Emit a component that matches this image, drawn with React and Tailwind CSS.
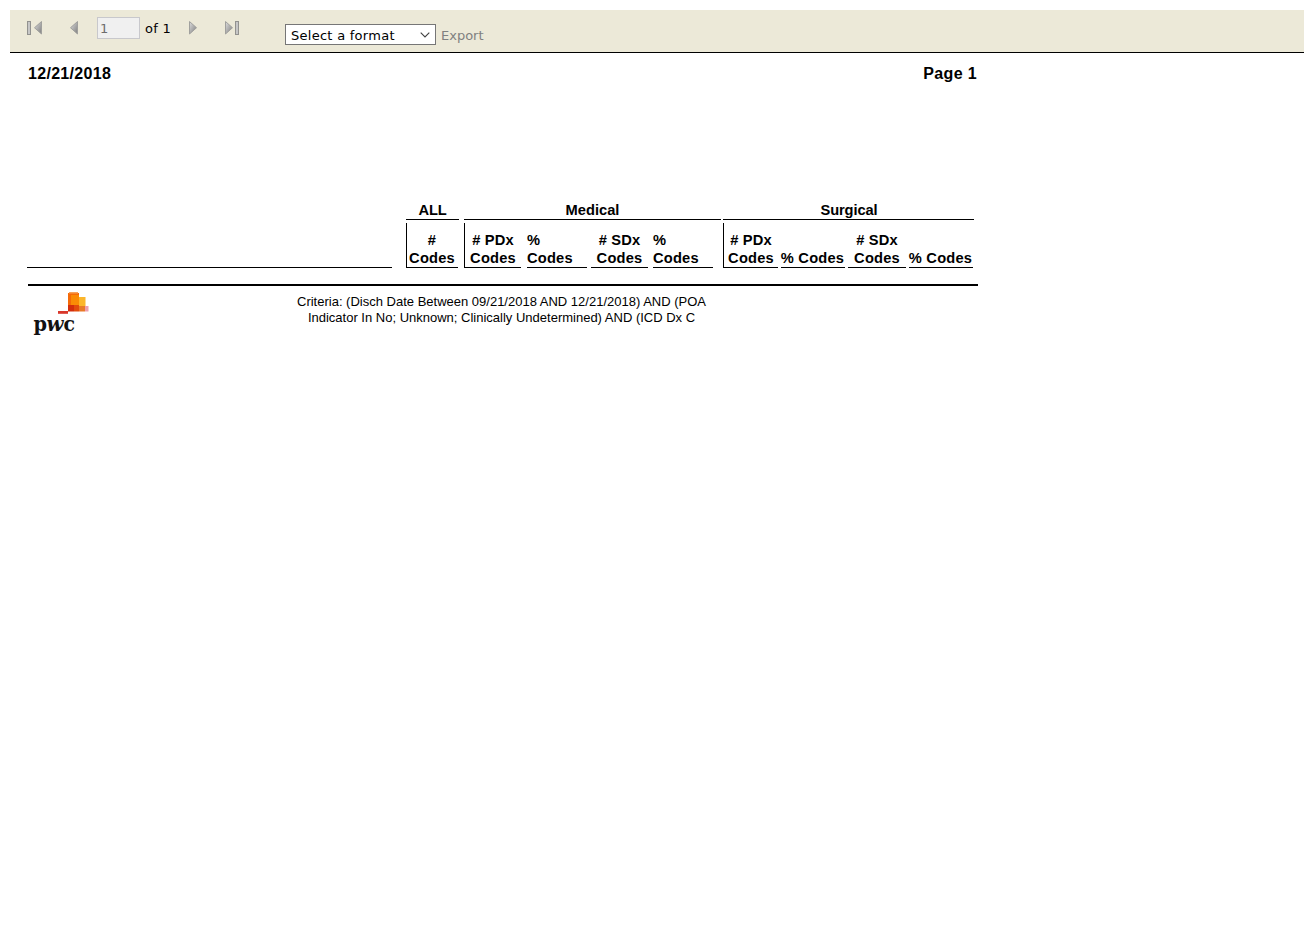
import React from "react";

function Arrow({ dir }) {
  const d = dir === "left" ? "M8.5 1.5V14L1.5 7.75Z" : "M1.5 1.5V14L8.5 7.75Z";
  return (
    <svg width="10" height="16" viewBox="0 0 10 16" className="block shrink-0">
      <defs>
        <linearGradient id={"arrow-" + dir} x1="0" y1="0" x2="1" y2="1">
          <stop offset="0" stopColor="#dedede" />
          <stop offset="1" stopColor="#7d7d7d" />
        </linearGradient>
      </defs>
      <path d={d} fill={"url(#arrow-" + dir + ")"} stroke="#a0a09d" strokeWidth="1" />
    </svg>
  );
}

function Bar() {
  return <span className="block h-[14px] w-[4px] shrink-0 border border-[#92928f] bg-[#c6c6c6]" />;
}

function Toolbar() {
  return (
    <div className="flex h-[43px] items-start border-b border-black bg-[#ece9d8] font-['DejaVu_Sans',sans-serif] text-[13px] text-black">
      <div className="mt-[10px] ml-[17px] flex h-[15px] w-[16px] items-center">
        <Bar />
        <span className="ml-[2px]"><Arrow dir="left" /></span>
      </div>
      <div className="mt-[10px] ml-[26px]"><Arrow dir="left" /></div>
      <div className="mt-[7px] ml-[18px] flex h-[22px] w-[43px] items-center border border-[#c8c8cc] bg-[#f0f0f0] pl-[2px] text-[#6d6d6d]">
        <span className="relative top-px">1</span>
      </div>
      <div className="mt-[9px] ml-[5px] w-[36px] leading-[20px] tracking-[0.25px] whitespace-nowrap">of 1</div>
      <div className="mt-[10px] ml-[7px]"><Arrow dir="right" /></div>
      <div className="mt-[10px] ml-[26px] flex h-[15px] w-[16px] items-center">
        <Arrow dir="right" />
        <span className="ml-[1px]"><Bar /></span>
      </div>
      <div className="mt-[14px] ml-[45px] flex h-[21px] w-[151px] items-center justify-between border border-[#767676] bg-white pr-[5px] pl-[5px] leading-[19px] whitespace-nowrap">
        <span className="relative top-px tracking-[0.27px]">Select a format</span>
        <svg width="10" height="6" viewBox="0 0 10 6" className="block">
          <path d="M0.7 0.7L5 5L9.3 0.7" fill="none" stroke="#404040" strokeWidth="1.1" />
        </svg>
      </div>
      <div className="mt-[16px] ml-[5px] leading-[20px] text-[#808080]">Export</div>
    </div>
  );
}

function Group({ className, children }) {
  return <div className={"h-[20px] shrink-0 border-b border-black text-center leading-[20px] " + className}>{children}</div>;
}

function Col({ className, children }) {
  return (
    <div className={"flex h-[45px] shrink-0 flex-col justify-end border-b border-black text-center leading-[18px] tracking-[0.2px] whitespace-nowrap " + className}>
      {children}
    </div>
  );
}

function Logo() {
  return (
    <div className="h-[48px] w-[58px]">
      <svg width="58" height="48" viewBox="0 0 58 48" className="block">
        <rect x="36" y="1" width="11" height="13" fill="#f56a08" />
        <rect x="37" y="0" width="9" height="1.5" fill="#f8a25b" />
        <rect x="39" y="3" width="8" height="11" fill="#fa8b05" />
        <rect x="47" y="5" width="6.5" height="9" fill="#fbb62b" />
        <rect x="36" y="13" width="6" height="6.5" fill="#d42e0c" />
        <rect x="42" y="13" width="5" height="6.5" fill="#e24b0c" />
        <rect x="47" y="14" width="6" height="5.5" fill="#e97928" />
        <rect x="53" y="14" width="3.5" height="5.5" fill="#ed9eae" />
        <rect x="26" y="19" width="10" height="2.8" fill="#d9372b" />
        <g fill="#111" fontFamily="'DejaVu Serif', serif" fontWeight="bold" fontSize="19.5">
          <text x="1.5" y="39" textLength="13.5" lengthAdjust="spacingAndGlyphs">p</text>
          <text x="14.5" y="39" textLength="17" lengthAdjust="spacingAndGlyphs" fontStyle="italic">w</text>
          <text x="31.5" y="39" textLength="11.5" lengthAdjust="spacingAndGlyphs">c</text>
        </g>
      </svg>
    </div>
  );
}

export default function App() {
  return (
    <div className="h-[937px] bg-white pt-[10px] pr-[8px] pl-[10px] font-['Liberation_Sans',Arial,sans-serif] text-black">
      <Toolbar />
      <div className="ml-[17px] w-[951px]">
        <div className="flex h-[29px] justify-between overflow-hidden pt-[12px] pl-px text-[16px] leading-[18px] font-bold">
          <span className="tracking-[0.3px]">12/21/2018</span>
          <span className="pr-px tracking-[0.35px]">Page 1</span>
        </div>
        <div className="mt-[118px] flex pl-[379px] text-[14.67px] font-bold">
          <Group className="w-[53px] tracking-[-0.2px]">ALL</Group>
          <Group className="ml-[5px] w-[257px]">Medical</Group>
          <Group className="ml-[2px] w-[251px]">
            <span className="relative left-[0.5px] tracking-[-0.1px]">Surgical</span>
          </Group>
        </div>
        <div className="mt-[3px] flex text-[14.67px] font-bold">
          <Col className="w-[365px]" />
          <Col className="ml-[14px] w-[52px] border-l pr-px"><span>#</span><span>Codes</span></Col>
          <Col className="ml-[6px] w-[57px] border-l"><span># PDx</span><span>Codes</span></Col>
          <Col className="ml-[6px] w-[60px] text-left"><span>%</span><span>Codes</span></Col>
          <Col className="ml-[4px] w-[57px]"><span># SDx</span><span>Codes</span></Col>
          <Col className="ml-[5px] w-[60px] text-left"><span>%</span><span>Codes</span></Col>
          <Col className="ml-[10px] w-[55px] border-l"><span># PDx</span><span>Codes</span></Col>
          <Col className="ml-[3px] w-[64px]"><span className="-ml-px">% Codes</span></Col>
          <Col className="ml-[3px] w-[58px]"><span># SDx</span><span>Codes</span></Col>
          <Col className="ml-[3px] w-[64px]"><span className="-ml-px">% Codes</span></Col>
        </div>
        <div className="mt-[16px] ml-px h-[2px] bg-black" />
        <div className="flex pt-[6px] pl-[5px]">
          <Logo />
          <div className="ml-[201px] mt-[2px] w-[421px] text-center text-[13px] leading-[16px] whitespace-nowrap">
            <div>Criteria: (Disch Date Between 09/21/2018 AND 12/21/2018) AND (POA</div>
            <div>Indicator In No; Unknown; Clinically Undetermined) AND (ICD Dx C</div>
          </div>
        </div>
      </div>
    </div>
  );
}
